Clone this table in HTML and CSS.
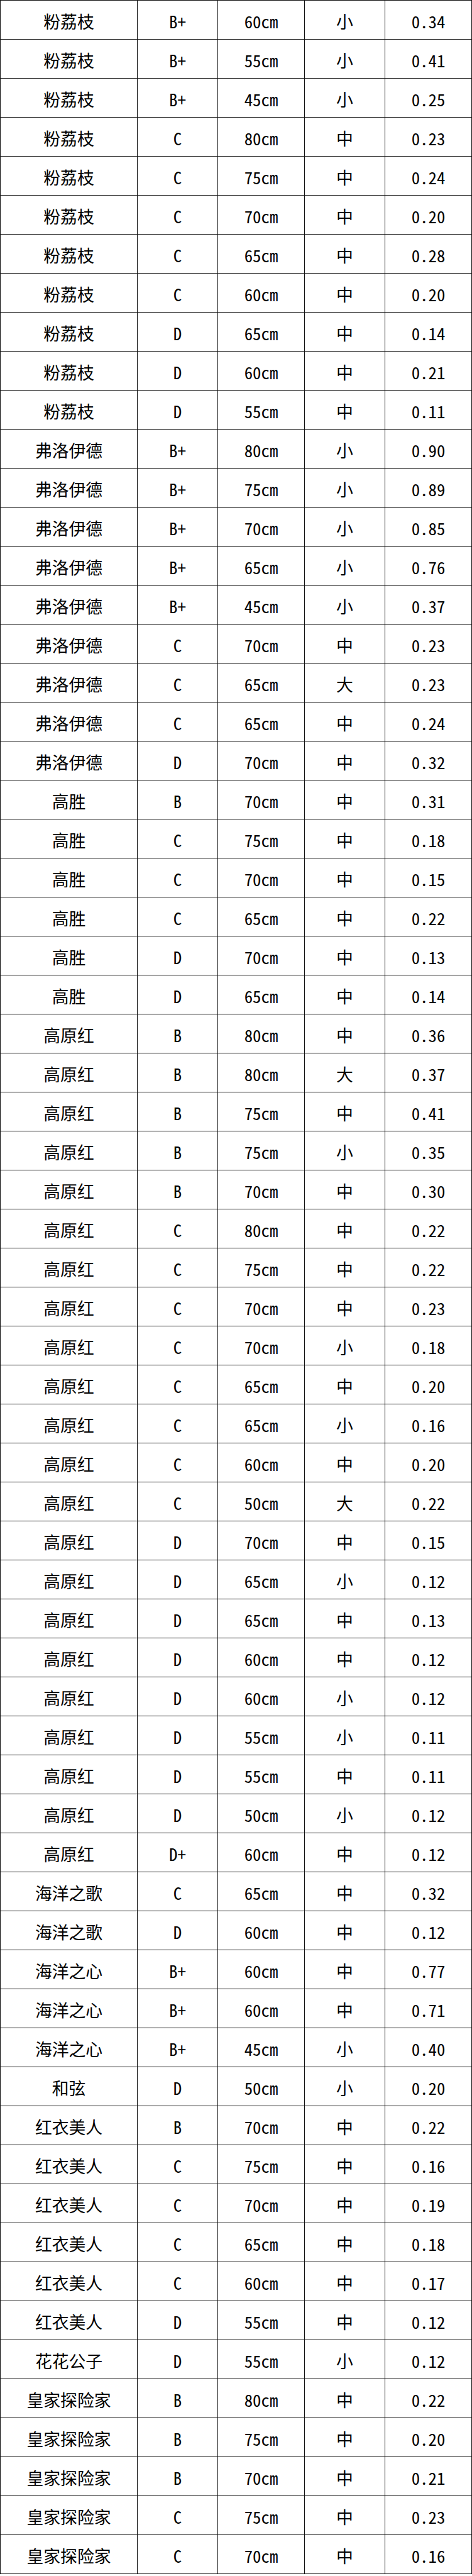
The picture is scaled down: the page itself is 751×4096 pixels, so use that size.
FILE: index.html
```html
<!DOCTYPE html>
<html lang="zh-CN">
<head>
<meta charset="utf-8">
<title>品种报价</title>
<link rel="stylesheet" href="styles.css">
</head>
<body>
<table class="grid">
<colgroup><col class="c-name"><col class="c-grade"><col class="c-len"><col class="c-size"><col class="c-price"></colgroup>
<tbody>
<tr><td>粉荔枝</td><td>B+</td><td>60cm</td><td>小</td><td>0.34</td></tr>
<tr><td>粉荔枝</td><td>B+</td><td>55cm</td><td>小</td><td>0.41</td></tr>
<tr><td>粉荔枝</td><td>B+</td><td>45cm</td><td>小</td><td>0.25</td></tr>
<tr><td>粉荔枝</td><td>C</td><td>80cm</td><td>中</td><td>0.23</td></tr>
<tr><td>粉荔枝</td><td>C</td><td>75cm</td><td>中</td><td>0.24</td></tr>
<tr><td>粉荔枝</td><td>C</td><td>70cm</td><td>中</td><td>0.20</td></tr>
<tr><td>粉荔枝</td><td>C</td><td>65cm</td><td>中</td><td>0.28</td></tr>
<tr><td>粉荔枝</td><td>C</td><td>60cm</td><td>中</td><td>0.20</td></tr>
<tr><td>粉荔枝</td><td>D</td><td>65cm</td><td>中</td><td>0.14</td></tr>
<tr><td>粉荔枝</td><td>D</td><td>60cm</td><td>中</td><td>0.21</td></tr>
<tr><td>粉荔枝</td><td>D</td><td>55cm</td><td>中</td><td>0.11</td></tr>
<tr><td>弗洛伊德</td><td>B+</td><td>80cm</td><td>小</td><td>0.90</td></tr>
<tr><td>弗洛伊德</td><td>B+</td><td>75cm</td><td>小</td><td>0.89</td></tr>
<tr><td>弗洛伊德</td><td>B+</td><td>70cm</td><td>小</td><td>0.85</td></tr>
<tr><td>弗洛伊德</td><td>B+</td><td>65cm</td><td>小</td><td>0.76</td></tr>
<tr><td>弗洛伊德</td><td>B+</td><td>45cm</td><td>小</td><td>0.37</td></tr>
<tr><td>弗洛伊德</td><td>C</td><td>70cm</td><td>中</td><td>0.23</td></tr>
<tr><td>弗洛伊德</td><td>C</td><td>65cm</td><td>大</td><td>0.23</td></tr>
<tr><td>弗洛伊德</td><td>C</td><td>65cm</td><td>中</td><td>0.24</td></tr>
<tr><td>弗洛伊德</td><td>D</td><td>70cm</td><td>中</td><td>0.32</td></tr>
<tr><td>高胜</td><td>B</td><td>70cm</td><td>中</td><td>0.31</td></tr>
<tr><td>高胜</td><td>C</td><td>75cm</td><td>中</td><td>0.18</td></tr>
<tr><td>高胜</td><td>C</td><td>70cm</td><td>中</td><td>0.15</td></tr>
<tr><td>高胜</td><td>C</td><td>65cm</td><td>中</td><td>0.22</td></tr>
<tr><td>高胜</td><td>D</td><td>70cm</td><td>中</td><td>0.13</td></tr>
<tr><td>高胜</td><td>D</td><td>65cm</td><td>中</td><td>0.14</td></tr>
<tr><td>高原红</td><td>B</td><td>80cm</td><td>中</td><td>0.36</td></tr>
<tr><td>高原红</td><td>B</td><td>80cm</td><td>大</td><td>0.37</td></tr>
<tr><td>高原红</td><td>B</td><td>75cm</td><td>中</td><td>0.41</td></tr>
<tr><td>高原红</td><td>B</td><td>75cm</td><td>小</td><td>0.35</td></tr>
<tr><td>高原红</td><td>B</td><td>70cm</td><td>中</td><td>0.30</td></tr>
<tr><td>高原红</td><td>C</td><td>80cm</td><td>中</td><td>0.22</td></tr>
<tr><td>高原红</td><td>C</td><td>75cm</td><td>中</td><td>0.22</td></tr>
<tr><td>高原红</td><td>C</td><td>70cm</td><td>中</td><td>0.23</td></tr>
<tr><td>高原红</td><td>C</td><td>70cm</td><td>小</td><td>0.18</td></tr>
<tr><td>高原红</td><td>C</td><td>65cm</td><td>中</td><td>0.20</td></tr>
<tr><td>高原红</td><td>C</td><td>65cm</td><td>小</td><td>0.16</td></tr>
<tr><td>高原红</td><td>C</td><td>60cm</td><td>中</td><td>0.20</td></tr>
<tr><td>高原红</td><td>C</td><td>50cm</td><td>大</td><td>0.22</td></tr>
<tr><td>高原红</td><td>D</td><td>70cm</td><td>中</td><td>0.15</td></tr>
<tr><td>高原红</td><td>D</td><td>65cm</td><td>小</td><td>0.12</td></tr>
<tr><td>高原红</td><td>D</td><td>65cm</td><td>中</td><td>0.13</td></tr>
<tr><td>高原红</td><td>D</td><td>60cm</td><td>中</td><td>0.12</td></tr>
<tr><td>高原红</td><td>D</td><td>60cm</td><td>小</td><td>0.12</td></tr>
<tr><td>高原红</td><td>D</td><td>55cm</td><td>小</td><td>0.11</td></tr>
<tr><td>高原红</td><td>D</td><td>55cm</td><td>中</td><td>0.11</td></tr>
<tr><td>高原红</td><td>D</td><td>50cm</td><td>小</td><td>0.12</td></tr>
<tr><td>高原红</td><td>D+</td><td>60cm</td><td>中</td><td>0.12</td></tr>
<tr><td>海洋之歌</td><td>C</td><td>65cm</td><td>中</td><td>0.32</td></tr>
<tr><td>海洋之歌</td><td>D</td><td>60cm</td><td>中</td><td>0.12</td></tr>
<tr><td>海洋之心</td><td>B+</td><td>60cm</td><td>中</td><td>0.77</td></tr>
<tr><td>海洋之心</td><td>B+</td><td>60cm</td><td>中</td><td>0.71</td></tr>
<tr><td>海洋之心</td><td>B+</td><td>45cm</td><td>小</td><td>0.40</td></tr>
<tr><td>和弦</td><td>D</td><td>50cm</td><td>小</td><td>0.20</td></tr>
<tr><td>红衣美人</td><td>B</td><td>70cm</td><td>中</td><td>0.22</td></tr>
<tr><td>红衣美人</td><td>C</td><td>75cm</td><td>中</td><td>0.16</td></tr>
<tr><td>红衣美人</td><td>C</td><td>70cm</td><td>中</td><td>0.19</td></tr>
<tr><td>红衣美人</td><td>C</td><td>65cm</td><td>中</td><td>0.18</td></tr>
<tr><td>红衣美人</td><td>C</td><td>60cm</td><td>中</td><td>0.17</td></tr>
<tr><td>红衣美人</td><td>D</td><td>55cm</td><td>中</td><td>0.12</td></tr>
<tr><td>花花公子</td><td>D</td><td>55cm</td><td>小</td><td>0.12</td></tr>
<tr><td>皇家探险家</td><td>B</td><td>80cm</td><td>中</td><td>0.22</td></tr>
<tr><td>皇家探险家</td><td>B</td><td>75cm</td><td>中</td><td>0.20</td></tr>
<tr><td>皇家探险家</td><td>B</td><td>70cm</td><td>中</td><td>0.21</td></tr>
<tr><td>皇家探险家</td><td>C</td><td>75cm</td><td>中</td><td>0.23</td></tr>
<tr><td>皇家探险家</td><td>C</td><td>70cm</td><td>中</td><td>0.16</td></tr>
</tbody>
</table>
</body>
</html>
```
FILE: styles.css
```css
html, body {
  margin: 0;
  padding: 0;
  background: #ffffff;
}

.grid {
  border-collapse: collapse;
  table-layout: fixed;
  width: 750px;
  font-family: "Noto Sans Mono CJK SC", "Noto Sans CJK SC", "Liberation Mono", monospace;
  font-size: 26.8px;
  color: #000;
}

.c-name { width: 218px; }
.c-grade { width: 128px; }
.c-len { width: 138px; }
.c-size { width: 128px; }
.c-price { width: 138px; }

.grid td {
  height: 56px;
  padding: 5px 0 0 0;
  border: 1px solid #111;
  text-align: center;
  vertical-align: middle;
  line-height: 1;
  white-space: nowrap;
}
```
